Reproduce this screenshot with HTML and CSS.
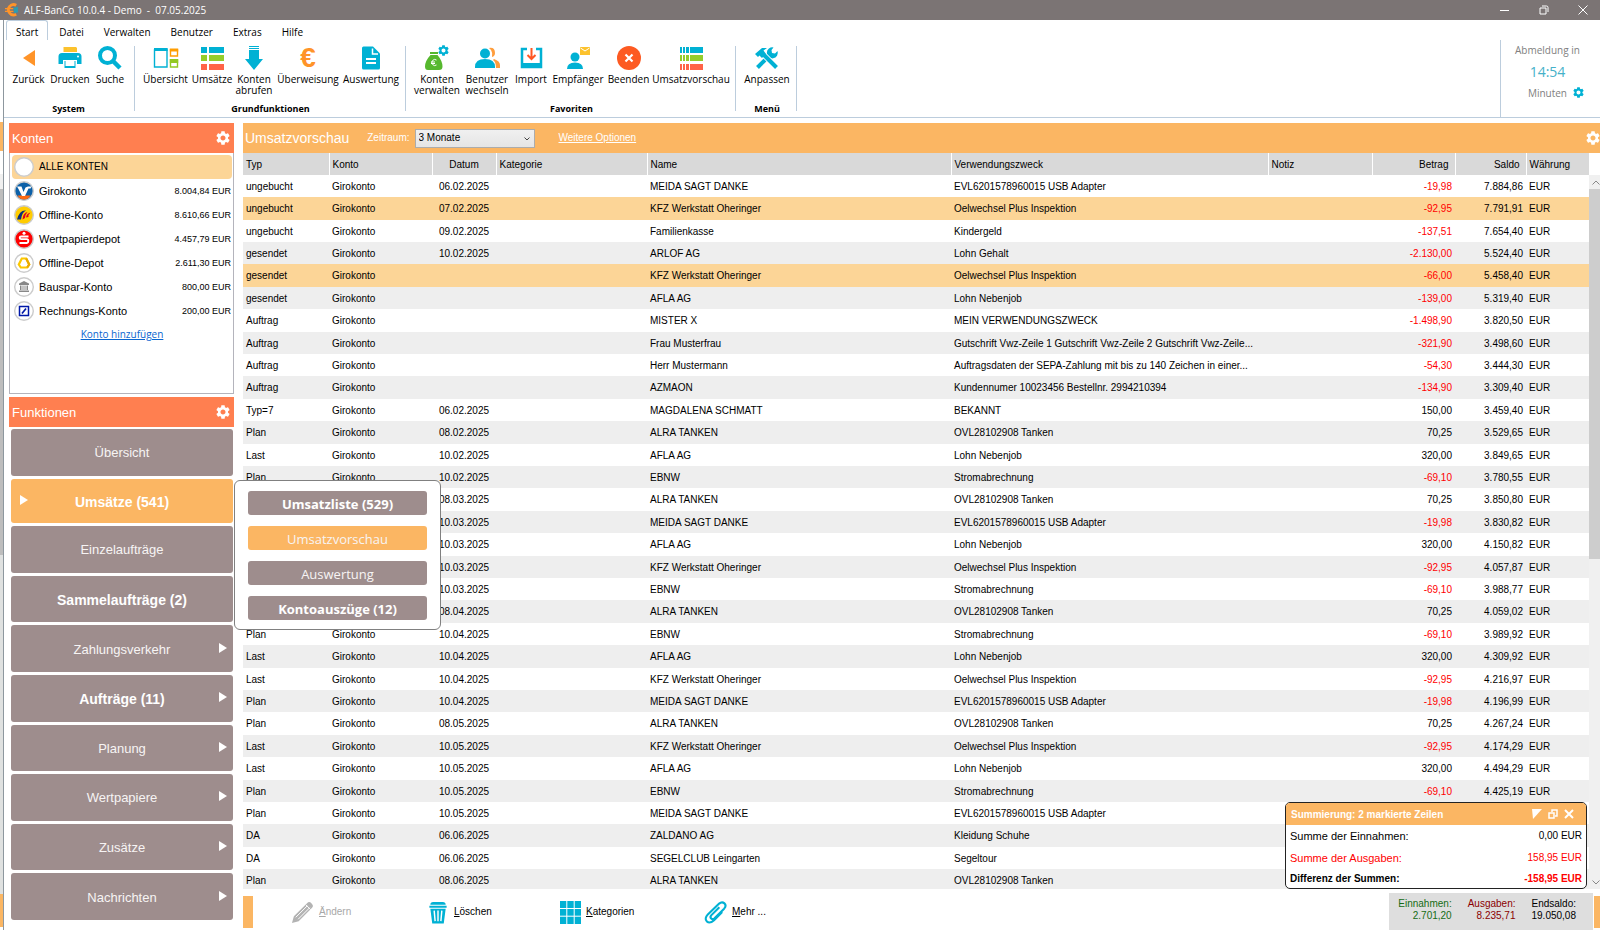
FILE: index.html
```html
<!DOCTYPE html>
<html lang="de">
<head>
    <meta charset="UTF-8">
    <meta name="viewport" content="width=device-width, initial-scale=1.0">
    <title>ALF-BanCo 10.0.4 - Demo</title>
    <link rel="stylesheet" href="styles.css">
</head>
<body>
    <!-- Shared icon shapes -->
    <svg class="sprite" aria-hidden="true">
        <symbol id="gear" viewBox="2 2 20 20"><path d="M19.14 12.94c.04-.3.06-.61.06-.94 0-.32-.02-.64-.07-.94l2.03-1.58c.18-.14.23-.41.12-.61l-1.92-3.32c-.12-.22-.37-.29-.59-.22l-2.39.96c-.5-.38-1.03-.7-1.62-.94l-.36-2.54c-.04-.24-.24-.41-.48-.41h-3.84c-.24 0-.43.17-.47.41l-.36 2.54c-.59.24-1.13.57-1.62.94l-2.39-.96c-.22-.08-.47 0-.59.22L2.74 8.87c-.12.21-.08.47.12.61l2.03 1.58c-.05.3-.09.63-.09.94s.02.64.07.94l-2.03 1.58c-.18.14-.23.41-.12.61l1.92 3.32c.12.22.37.29.59.22l2.39-.96c.5.38 1.03.7 1.62.94l.36 2.54c.05.24.24.41.48.41h3.84c.24 0 .44-.17.47-.41l.36-2.54c.59-.24 1.13-.56 1.62-.94l2.39.96c.22.08.47 0 .59-.22l1.92-3.32c.12-.22.07-.47-.12-.61l-2.01-1.58zM12 15.6c-1.98 0-3.6-1.62-3.6-3.6s1.62-3.6 3.6-3.6 3.6 1.62 3.6 3.6-1.62 3.6-3.6 3.6z"/></symbol>
        <symbol id="arrow" viewBox="0 0 8 10"><path d="M0 0l8 5-8 5z"/></symbol>
    </svg>

    <header class="titlebar">
        <svg class="app-icon" viewBox="0 0 15 15"><path d="M12 2.500A5.500 5.500 0 1 0 12 12" fill="none" stroke="#ff9429" stroke-width="3"/><path d="M0 6h9M0 9h9" stroke="#ff9429" stroke-width="1.500"/><path d="M9 5l5-1v6l-4 1z" fill="#2e9bb0"/></svg>
        <span class="app-title">ALF-BanCo 10.0.4 - Demo&nbsp; -&nbsp; 07.05.2025</span>
        <div class="window-buttons">
            <button aria-label="Minimieren"><svg viewBox="0 0 10 10"><path d="M0 5.500h9"/></svg></button>
            <button aria-label="Wiederherstellen"><svg viewBox="0 0 10 10"><path d="M1 3h6v6H1zM3 1h4.500Q9 1 9 2.500V7"/></svg></button>
            <button aria-label="Schließen"><svg viewBox="0 0 10 10"><path d="M.5.500l9 9M9.500.500l-9 9"/></svg></button>
        </div>
    </header>

    <div class="window">
        <div class="backdrop"></div>
        <div class="content">
            <div class="top">
                <div class="top-left">
                    <nav class="menu">
                        <a href="#" class="active">Start</a>
                        <a href="#">Datei</a>
                        <a href="#">Verwalten</a>
                        <a href="#">Benutzer</a>
                        <a href="#">Extras</a>
                        <a href="#">Hilfe</a>
                    </nav>
                    <div class="ribbon">
                        <section class="group group-system">
                            <div class="tools">
                                <button><svg viewBox="0 0 24 24"><path d="M18 4v16L6 12z" fill="#ff9429"/></svg>Zurück</button>
                                <button><svg viewBox="0 0 24 24"><path d="M5.500 1H18l1 1v4H5.500z" fill="#fcc22d"/><path d="M4 7h16q3.500 0 3.500 3.500V18H19v-4H5v4H.5v-7.500Q.5 7 4 7z" fill="#00b1d4"/><path d="M6.500 15h11v7h-11z" fill="#00b1d4"/><path d="M7.500 14.500h9v5.500h-9z" fill="#fff"/><circle cx="20" cy="10.500" r="1" fill="#fff"/></svg>Drucken</button>
                                <button><svg viewBox="0 0 24 24"><circle cx="9.500" cy="9.500" r="7.500" fill="none" stroke="#00b1d4" stroke-width="4"/><path d="M15 15l7 7" stroke="#00b1d4" stroke-width="4.500"/></svg>Suche</button>
                            </div>
                            <h2>System</h2>
                        </section>
                        <section class="group group-basic">
                            <div class="tools">
                                <button><svg viewBox="0 0 24 24"><path d="M.5 4h12.500v17H.5z" fill="#fff" stroke="#00b1d4" stroke-width="1.400"/><path d="M0 2h13.700v3H0z" fill="#00b1d4"/><path d="M16.500 4h7v6h-7z" fill="#fff" stroke="#ff9d00" stroke-width="1.400"/><path d="M15.800 2.500h8.400v3h-8.400z" fill="#ff9d00"/><path d="M16.500 14h7v7h-7z" fill="#fff" stroke="#93c922" stroke-width="1.400"/><path d="M15.800 13h8.400v4h-8.400z" fill="#93c922"/></svg>Übersicht</button>
                                <button><svg viewBox="0 0 24 24"><path d="M1 1h6v6H1zM9 1h15v6H9z" fill="#00b1d4"/><path d="M1 9h6v6H1zM9 9h15v6H9z" fill="#93cd2b"/><path d="M1 18h6v6H1zM9 18h15v6H9z" fill="#ff6347"/></svg>Umsätze</button>
                                <button><svg viewBox="0 0 24 24"><path d="M7 0h10v1H7zM7 2h10v1H7zM7 4h10v9h4l-9 11-9-11h4z" fill="#00b1d4"/></svg>Konten<br>abrufen</button>
                                <button><span class="euro">€</span>Überweisung</button>
                                <button><svg viewBox="0 0 24 24"><path d="M4.500.500h9.500L21 7.500V22q0 1.500-1.500 1.500h-15Q3 23.500 3 22V2Q3 .500 4.500.500z" fill="#00b1d4"/><path d="M13.500 2.500v5.500H19" fill="none" stroke="#fff" stroke-width="1.500"/><path d="M7 13h10M7 17h10" stroke="#fff" stroke-width="2"/></svg>Auswertung</button>
                            </div>
                            <h2>Grundfunktionen</h2>
                        </section>
                        <section class="group group-favorites">
                            <div class="tools">
                                <button><svg viewBox="0 0 24 24"><path d="M5 6h8v2H5zM5.500 9h7q5 6 5 11.500Q17.500 24 14 24H3Q0 24 0 20.500 0 15 5.500 9z" fill="#56b82e"/><path d="M11.500 14a3 3 0 1 0 0 5M6 16h4M6 17.500h4" fill="none" stroke="#fff"/><use href="#gear" x="13" y="-1" width="11" height="11" fill="#00b1d4"/></svg>Konten<br>verwalten</button>
                                <button><svg viewBox="0 0 24 24"><path d="M14 2q6-1 6 5 0 3-3 4 1-4-1-7zM19 13q6 2 6 6v3h-4q0-6-3-8z" fill="#ff9d3c"/><circle cx="10" cy="7.500" r="5" fill="#00b1d4"/><path d="M0 21q0-8 10-8t10 8v1H0z" fill="#00b1d4"/></svg>Benutzer<br>wechseln</button>
                                <button><svg viewBox="0 0 24 24"><path d="M8 3H3v18h19V3h-5" fill="none" stroke="#00b1d4" stroke-width="2.500"/><path d="M2 17h21v5H2z" fill="#00b1d4"/><path d="M12.500 2v10M8.500 9l4 4 4-4" fill="none" stroke="#ff5722" stroke-width="2"/></svg>Import</button>
                                <button><svg viewBox="0 0 24 24"><circle cx="9" cy="11" r="4.500" fill="#00b1d4"/><path d="M1 23q0-6.500 8-6.500t8 6.500z" fill="#00b1d4"/><path d="M14 1h10v8H14z" fill="#fcc22d"/><path d="M14.500 2l4.500 3 4.500-3" fill="none" stroke="#fff"/></svg>Empfänger</button>
                                <button><svg viewBox="0 0 24 24"><circle cx="12" cy="12" r="12" fill="#fd5a22"/><path d="M8.500 8.500l7 7M15.500 8.500l-7 7" stroke="#fff" stroke-width="2.200"/></svg>Beenden</button>
                                <button><svg viewBox="0 0 24 24"><path d="M1 1h2v6H1zM4 1h2v6H4zM7 1h3v6H7zM11 1h13v6H11z" fill="#00b1d4"/><path d="M1 9h2v6H1zM4 9h2v6H4zM7 9h3v6H7zM11 9h13v6H11z" fill="#93cd2b"/><path d="M1 18h2v6H1zM4 18h2v6H4zM7 18h3v6H7zM11 18h13v6H11z" fill="#ff6347"/></svg>Umsatzvorschau</button>
                            </div>
                            <h2>Favoriten</h2>
                        </section>
                        <section class="group group-menu">
                            <div class="tools">
                                <button><svg viewBox="0 0 24 24"><path d="M2.500 21.500l12-12" stroke="#00b1d4" stroke-width="4"/><path d="M22.500 5a5.500 5.500 0 1 1-4-3.500L16.500 4l.5 3 3 .5z" fill="#00b1d4"/><path d="M10 10l11.500 11.500" stroke="#fff" stroke-width="6"/><path d="M9 9l12.500 12.500" stroke="#00b1d4" stroke-width="4"/><path d="M0 8l7-6h5L8.500 4.500 11 8l-4 4-2.500-2.500L3 11z" fill="#00b1d4"/></svg>Anpassen</button>
                            </div>
                            <h2>Menü</h2>
                        </section>
                    </div>
                </div>
                <div class="logout">
                    <div>Abmeldung in</div>
                    <div class="time">14:54</div>
                    <div class="minutes">Minuten <svg class="gear-small"><use href="#gear"/></svg></div>
                </div>
            </div>

            <div class="body">
                <aside class="sidebar">
                    <div class="panel-head"><h2>Konten</h2><button aria-label="Konten einstellen"><svg><use href="#gear"/></svg></button></div>
                    <div class="accounts">
                        <ul>
                            <li class="selected"><svg viewBox="0 0 20 20"><circle cx="10" cy="10" r="9.300" fill="#fff" stroke="#ccc" stroke-width="1.400"/></svg><span class="name">ALLE KONTEN</span></li>
                            <li><svg viewBox="0 0 20 20"><circle cx="10" cy="10" r="9.300" fill="#0b60a8" stroke="#ccc" stroke-width="1.400"/><path d="M3.500 14.500h13q-2 4-6.500 4t-6.500-4z" fill="#ff6a13"/><path d="M3 5.500h4.500L9.500 11l2-4.500 2.500-1h3.500l-1 2h-2L11 15H8L4.500 8z" fill="#fff"/></svg><span class="name">Girokonto</span><span class="amount">8.004,84 EUR</span></li>
                            <li><svg viewBox="0 0 20 20"><circle cx="10" cy="10" r="9.300" fill="#fc0" stroke="#ccc" stroke-width="1.400"/><path d="M3 14.500Q5.500 5.500 11 5.500h1Q8 7 7 14.500z" fill="#0a2f7a"/><path d="M8.500 14.500Q9 7.500 13.500 7q-2 2-2.500 6z" fill="#e3001b"/><path d="M12 12.500q.5-4 4.500-5-2.500 2-2 4.500z" fill="#e3001b"/></svg><span class="name">Offline-Konto</span><span class="amount">8.610,66 EUR</span></li>
                            <li><svg viewBox="0 0 20 20"><circle cx="10" cy="10" r="9.300" fill="#f00" stroke="#ccc" stroke-width="1.400"/><circle cx="10" cy="4.300" r="1.500" fill="#fff"/><path d="M14.500 7.500H7.200q-1.500 0-1.500 1.300t1.500 1.300h5.600q1.500 0 1.500 1.800T12.800 14H5.500" fill="none" stroke="#fff" stroke-width="1.900"/></svg><span class="name">Wertpapierdepot</span><span class="amount">4.457,79 EUR</span></li>
                            <li><svg viewBox="0 0 20 20"><circle cx="10" cy="10" r="9.300" fill="#fff" stroke="#ccc" stroke-width="1.400"/><path d="M7.800 5.500h4.400l3 6-2 3H6.800l-2-3z" fill="none" stroke="#fcc800" stroke-width="2.200"/><path d="M12.200 5.500l3 6-2 3" fill="none" stroke="#eaa900" stroke-width="2.200"/></svg><span class="name">Offline-Depot</span><span class="amount">2.611,30 EUR</span></li>
                            <li><svg viewBox="0 0 20 20"><circle cx="10" cy="10" r="9.300" fill="#fff" stroke="#ccc" stroke-width="1.400"/><path d="M5 6.500L10 4l5 2.500V8H5zM6 8.500h1.500V13H6zM8.500 8.500h1V13h-1zM10.500 8.500h1V13h-1zM12.500 8.500H14V13h-1.500zM5 13.500h10V15H5z" fill="#888"/></svg><span class="name">Bauspar-Konto</span><span class="amount">800,00 EUR</span></li>
                            <li><svg viewBox="0 0 20 20"><circle cx="10" cy="10" r="9.300" fill="#fff" stroke="#ccc" stroke-width="1.400"/><path d="M5.500 5.500h9v9h-9z" fill="none" stroke="#0018a8" stroke-width="1.500"/><path d="M8 12.500l4-5" stroke="#0018a8" stroke-width="1.700"/></svg><span class="name">Rechnungs-Konto</span><span class="amount">200,00 EUR</span></li>
                        </ul>
                        <a href="#" class="add-account">Konto hinzufügen</a>
                    </div>
                    <div class="panel-head functions-head"><h2>Funktionen</h2><button aria-label="Funktionen einstellen"><svg><use href="#gear"/></svg></button></div>
                    <nav class="functions">
                        <button>Übersicht</button>
                        <div class="open">
                            <button class="current"><svg class="left"><use href="#arrow"/></svg>Umsätze (541)</button>
                            <div class="flyout">
                                <button class="strong">Umsatzliste (529)</button>
                                <button class="current">Umsatzvorschau</button>
                                <button>Auswertung</button>
                                <button class="strong">Kontoauszüge (12)</button>
                            </div>
                        </div>
                        <button>Einzelaufträge</button>
                        <button class="strong">Sammelaufträge (2)</button>
                        <button>Zahlungsverkehr<svg><use href="#arrow"/></svg></button>
                        <button class="strong">Aufträge (11)<svg><use href="#arrow"/></svg></button>
                        <button>Planung<svg><use href="#arrow"/></svg></button>
                        <button>Wertpapiere<svg><use href="#arrow"/></svg></button>
                        <button>Zusätze<svg><use href="#arrow"/></svg></button>
                        <button>Nachrichten<svg><use href="#arrow"/></svg></button>
                    </nav>
                </aside>

                <main class="main">
                    <div class="main-head">
                        <h1>Umsatzvorschau</h1>
                        <label for="period">Zeitraum:</label>
                        <div class="select-box">
                            <select id="period"><option>3 Monate</option><option>6 Monate</option></select>
                            <svg viewBox="0 0 6 4"><path d="M.5.500L3 3 5.500.500" fill="none" stroke="#444"/></svg>
                        </div>
                        <a href="#">Weitere Optionen</a>
                        <button aria-label="Ansicht einstellen"><svg><use href="#gear"/></svg></button>
                    </div>
                    <div class="table-area">
                        <div class="table-wrap">
                            <table>
                                <colgroup>
                                    <col class="c-typ"><col class="c-konto"><col class="c-datum"><col class="c-kategorie"><col class="c-name"><col><col class="c-notiz"><col class="c-betrag"><col class="c-saldo"><col class="c-waehrung">
                                </colgroup>
                                <thead>
                                    <tr><th>Typ</th><th>Konto</th><th class="date">Datum</th><th>Kategorie</th><th>Name</th><th>Verwendungszweck</th><th>Notiz</th><th class="num">Betrag</th><th class="num">Saldo</th><th>Währung</th></tr>
                                </thead>
                                <tbody>
                                    <tr><td>ungebucht</td><td>Girokonto</td><td class="date">06.02.2025</td><td></td><td>MEIDA SAGT DANKE</td><td>EVL6201578960015 USB Adapter</td><td></td><td class="num neg">-19,98</td><td class="num">7.884,86</td><td>EUR</td></tr>
                                    <tr class="selected"><td>ungebucht</td><td>Girokonto</td><td class="date">07.02.2025</td><td></td><td>KFZ Werkstatt Oheringer</td><td>Oelwechsel Plus Inspektion</td><td></td><td class="num neg">-92,95</td><td class="num">7.791,91</td><td>EUR</td></tr>
                                    <tr><td>ungebucht</td><td>Girokonto</td><td class="date">09.02.2025</td><td></td><td>Familienkasse</td><td>Kindergeld</td><td></td><td class="num neg">-137,51</td><td class="num">7.654,40</td><td>EUR</td></tr>
                                    <tr><td>gesendet</td><td>Girokonto</td><td class="date">10.02.2025</td><td></td><td>ARLOF AG</td><td>Lohn Gehalt</td><td></td><td class="num neg">-2.130,00</td><td class="num">5.524,40</td><td>EUR</td></tr>
                                    <tr class="selected"><td>gesendet</td><td>Girokonto</td><td class="date"></td><td></td><td>KFZ Werkstatt Oheringer</td><td>Oelwechsel Plus Inspektion</td><td></td><td class="num neg">-66,00</td><td class="num">5.458,40</td><td>EUR</td></tr>
                                    <tr><td>gesendet</td><td>Girokonto</td><td class="date"></td><td></td><td>AFLA AG</td><td>Lohn Nebenjob</td><td></td><td class="num neg">-139,00</td><td class="num">5.319,40</td><td>EUR</td></tr>
                                    <tr><td>Auftrag</td><td>Girokonto</td><td class="date"></td><td></td><td>MISTER X</td><td>MEIN VERWENDUNGSZWECK</td><td></td><td class="num neg">-1.498,90</td><td class="num">3.820,50</td><td>EUR</td></tr>
                                    <tr><td>Auftrag</td><td>Girokonto</td><td class="date"></td><td></td><td>Frau Musterfrau</td><td>Gutschrift Vwz-Zeile 1 Gutschrift Vwz-Zeile 2 Gutschrift Vwz-Zeile...</td><td></td><td class="num neg">-321,90</td><td class="num">3.498,60</td><td>EUR</td></tr>
                                    <tr><td>Auftrag</td><td>Girokonto</td><td class="date"></td><td></td><td>Herr Mustermann</td><td>Auftragsdaten der SEPA-Zahlung mit bis zu 140 Zeichen in einer...</td><td></td><td class="num neg">-54,30</td><td class="num">3.444,30</td><td>EUR</td></tr>
                                    <tr><td>Auftrag</td><td>Girokonto</td><td class="date"></td><td></td><td>AZMAON</td><td>Kundennumer 10023456 Bestellnr. 2994210394</td><td></td><td class="num neg">-134,90</td><td class="num">3.309,40</td><td>EUR</td></tr>
                                    <tr><td>Typ=7</td><td>Girokonto</td><td class="date">06.02.2025</td><td></td><td>MAGDALENA SCHMATT</td><td>BEKANNT</td><td></td><td class="num">150,00</td><td class="num">3.459,40</td><td>EUR</td></tr>
                                    <tr><td>Plan</td><td>Girokonto</td><td class="date">08.02.2025</td><td></td><td>ALRA TANKEN</td><td>OVL28102908 Tanken</td><td></td><td class="num">70,25</td><td class="num">3.529,65</td><td>EUR</td></tr>
                                    <tr><td>Last</td><td>Girokonto</td><td class="date">10.02.2025</td><td></td><td>AFLA AG</td><td>Lohn Nebenjob</td><td></td><td class="num">320,00</td><td class="num">3.849,65</td><td>EUR</td></tr>
                                    <tr><td>Plan</td><td>Girokonto</td><td class="date">10.02.2025</td><td></td><td>EBNW</td><td>Stromabrechnung</td><td></td><td class="num neg">-69,10</td><td class="num">3.780,55</td><td>EUR</td></tr>
                                    <tr><td></td><td></td><td class="date">08.03.2025</td><td></td><td>ALRA TANKEN</td><td>OVL28102908 Tanken</td><td></td><td class="num">70,25</td><td class="num">3.850,80</td><td>EUR</td></tr>
                                    <tr><td></td><td></td><td class="date">10.03.2025</td><td></td><td>MEIDA SAGT DANKE</td><td>EVL6201578960015 USB Adapter</td><td></td><td class="num neg">-19,98</td><td class="num">3.830,82</td><td>EUR</td></tr>
                                    <tr><td></td><td></td><td class="date">10.03.2025</td><td></td><td>AFLA AG</td><td>Lohn Nebenjob</td><td></td><td class="num">320,00</td><td class="num">4.150,82</td><td>EUR</td></tr>
                                    <tr><td></td><td></td><td class="date">10.03.2025</td><td></td><td>KFZ Werkstatt Oheringer</td><td>Oelwechsel Plus Inspektion</td><td></td><td class="num neg">-92,95</td><td class="num">4.057,87</td><td>EUR</td></tr>
                                    <tr><td></td><td></td><td class="date">10.03.2025</td><td></td><td>EBNW</td><td>Stromabrechnung</td><td></td><td class="num neg">-69,10</td><td class="num">3.988,77</td><td>EUR</td></tr>
                                    <tr><td></td><td></td><td class="date">08.04.2025</td><td></td><td>ALRA TANKEN</td><td>OVL28102908 Tanken</td><td></td><td class="num">70,25</td><td class="num">4.059,02</td><td>EUR</td></tr>
                                    <tr><td>Plan</td><td>Girokonto</td><td class="date">10.04.2025</td><td></td><td>EBNW</td><td>Stromabrechnung</td><td></td><td class="num neg">-69,10</td><td class="num">3.989,92</td><td>EUR</td></tr>
                                    <tr><td>Last</td><td>Girokonto</td><td class="date">10.04.2025</td><td></td><td>AFLA AG</td><td>Lohn Nebenjob</td><td></td><td class="num">320,00</td><td class="num">4.309,92</td><td>EUR</td></tr>
                                    <tr><td>Last</td><td>Girokonto</td><td class="date">10.04.2025</td><td></td><td>KFZ Werkstatt Oheringer</td><td>Oelwechsel Plus Inspektion</td><td></td><td class="num neg">-92,95</td><td class="num">4.216,97</td><td>EUR</td></tr>
                                    <tr><td>Plan</td><td>Girokonto</td><td class="date">10.04.2025</td><td></td><td>MEIDA SAGT DANKE</td><td>EVL6201578960015 USB Adapter</td><td></td><td class="num neg">-19,98</td><td class="num">4.196,99</td><td>EUR</td></tr>
                                    <tr><td>Plan</td><td>Girokonto</td><td class="date">08.05.2025</td><td></td><td>ALRA TANKEN</td><td>OVL28102908 Tanken</td><td></td><td class="num">70,25</td><td class="num">4.267,24</td><td>EUR</td></tr>
                                    <tr><td>Last</td><td>Girokonto</td><td class="date">10.05.2025</td><td></td><td>KFZ Werkstatt Oheringer</td><td>Oelwechsel Plus Inspektion</td><td></td><td class="num neg">-92,95</td><td class="num">4.174,29</td><td>EUR</td></tr>
                                    <tr><td>Last</td><td>Girokonto</td><td class="date">10.05.2025</td><td></td><td>AFLA AG</td><td>Lohn Nebenjob</td><td></td><td class="num">320,00</td><td class="num">4.494,29</td><td>EUR</td></tr>
                                    <tr><td>Plan</td><td>Girokonto</td><td class="date">10.05.2025</td><td></td><td>EBNW</td><td>Stromabrechnung</td><td></td><td class="num neg">-69,10</td><td class="num">4.425,19</td><td>EUR</td></tr>
                                    <tr><td>Plan</td><td>Girokonto</td><td class="date">10.05.2025</td><td></td><td>MEIDA SAGT DANKE</td><td>EVL6201578960015 USB Adapter</td><td></td><td></td><td></td><td></td></tr>
                                    <tr><td>DA</td><td>Girokonto</td><td class="date">06.06.2025</td><td></td><td>ZALDANO AG</td><td>Kleidung Schuhe</td><td></td><td></td><td></td><td></td></tr>
                                    <tr><td>DA</td><td>Girokonto</td><td class="date">06.06.2025</td><td></td><td>SEGELCLUB Leingarten</td><td>Segeltour</td><td></td><td></td><td></td><td></td></tr>
                                    <tr><td>Plan</td><td>Girokonto</td><td class="date">08.06.2025</td><td></td><td>ALRA TANKEN</td><td>OVL28102908 Tanken</td><td></td><td></td><td></td><td></td></tr>
                                </tbody>
                            </table>
                        </div>
                        <div class="scrollbar">
                            <svg viewBox="0 0 8 5"><path d="M.5 4.500L4 1l3.500 3.500"/></svg>
                            <div class="track"><div class="thumb"></div></div>
                            <svg viewBox="0 0 8 5"><path d="M.5.500L4 4 7.500.500"/></svg>
                        </div>

                        <div class="sum-box">
                            <div class="sum-head">
                                <span>Summierung: 2 markierte Zeilen</span>
                                <button aria-label="Verkleinern"><svg viewBox="0 0 10 10"><path d="M0 0h10L1 10z" fill="#fff"/></svg></button>
                                <button aria-label="Kopieren"><svg viewBox="0 0 10 10"><path d="M1 4h5v5H1zM4 3V1h5v6H7" fill="none" stroke="#fff" stroke-width="1.500"/></svg></button>
                                <button aria-label="Schließen"><svg viewBox="0 0 10 10"><path d="M1 1l8 8M9 1L1 9" stroke="#fff" stroke-width="2"/></svg></button>
                            </div>
                            <div class="sum-row"><span>Summe der Einnahmen:</span><b>0,00 EUR</b></div>
                            <div class="sum-row neg"><span>Summe der Ausgaben:</span><b>158,95 EUR</b></div>
                            <div class="sum-row diff"><span>Differenz der Summen:</span><b class="neg">-158,95 EUR</b></div>
                        </div>
                    </div>
                    <footer class="footer">
                        <div class="actions">
                            <button disabled><svg viewBox="0 0 24 24"><path d="M1 23l2-7L17 2q2-2 4.500.500T22 7L8 21z" fill="#b3b3b3"/><path d="M5 17L17 5M7.500 19L19.500 7" stroke="#fff"/><path d="M15.500 4l5 5" stroke="#fff"/></svg><span><u>Ä</u>ndern</span></button>
                            <button><svg class="bin" viewBox="0 0 18 24"><path d="M1 4Q1 1 4 1h10q3 0 3 3zM0 5h18v2H0zM1 8h16l-2 15.500H3z" fill="#00b1d4"/><path d="M5 10l1 11M9 10v11M13 10l-1 11" stroke="#fff" stroke-width="1.500"/></svg><span><u>L</u>öschen</span></button>
                            <button><svg class="tiles" viewBox="0 0 21 23"><path d="M0 0h21v23H0z" fill="#00b1d4"/><path d="M6.800 0v23M14.200 0v23M0 7.500h21M0 15.200h21" stroke="#fff"/></svg><span><u>K</u>ategorien</span></button>
                            <button><svg viewBox="0 0 24 24"><path d="M16 6.500L7.500 15q-1.500 1.800 0 3.200t3.200 0L21 8q2.800-3.200.3-5.500t-5.500.2L4 14q-4 4.500-1 7.300t7.500-1.300l8.500-8.500" fill="none" stroke="#00b1d4" stroke-width="2.200"/></svg><span><u>M</u>ehr ...</span></button>
                        </div>
                        <dl class="totals">
                            <div class="in"><dt>Einnahmen:</dt><dd>2.701,20</dd></div>
                            <div class="out"><dt>Ausgaben:</dt><dd>8.235,71</dd></div>
                            <div><dt>Endsaldo:</dt><dd>19.050,08</dd></div>
                        </dl>
                    </footer>
                </main>
            </div>
        </div>
    </div>
</body>
</html>
```
FILE: styles.css
```css
* {
    box-sizing: border-box;
}
body {
    margin: 0;
    height: 100vh;
    display: flex;
    flex-direction: column;
    overflow: hidden;
    background-color: #fff;
    color: #000;
    font-family: "Liberation Sans", Arial, sans-serif;
    font-size: 10px;
    line-height: 12px;
}
h1, h2, ul, dl, dd {
    margin: 0;
    padding: 0;
}
button {
    font: inherit;
    color: inherit;
    background: none;
    border: 0;
    padding: 0;
}
svg {
    display: block;
    overflow: visible;
}
.sprite {
    position: absolute;
    width: 0;
    height: 0;
}

/* Title bar */
.titlebar {
    display: flex;
    align-items: center;
    height: 20px;
    padding: 0 12px 0 5px;
    background-color: #7b7474;
    color: #fff;
    font-family: "Open Sans", "Segoe UI", sans-serif;
}
.app-icon {
    width: 14px;
    height: 14px;
    margin-right: 5px;
}
.app-title {
    flex: 1;
}
.window-buttons {
    display: flex;
    gap: 29px;
}
.window-buttons svg {
    width: 10px;
    height: 10px;
    fill: none;
    stroke: #fff;
}

.window {
    flex: 1;
    min-height: 0;
    display: flex;
}
/* Edge of the window behind */
.backdrop {
    width: 4px;
    border-right: 1px solid #8d979e;
    background: linear-gradient(#fff 102px, #fbb663 102px 131px, #fff 131px 154px, #f0f0f0 154px 169px, #bdbdbd 169px 535px, #dfe1e0 535px 874px, #fbb663 874px 907px, #fff 907px);
}
.content {
    flex: 1;
    min-width: 0;
    display: flex;
    flex-direction: column;
}

/* Menu and ribbon */
.top {
    display: flex;
    height: 98px;
    border-bottom: 1px solid #bccddd;
    font-family: "Open Sans", "Segoe UI", sans-serif;
}
.top-left {
    flex: 1;
}
.menu {
    display: flex;
    height: 20px;
    padding-left: 2px;
}
.menu a {
    padding: 6px 9px 0 9px;
    margin-right: 2px;
    color: #000;
    text-decoration: none;
}
.menu .active {
    border: 1px solid #bccddd;
    border-bottom: 0;
    border-radius: 3px 3px 0 0;
    padding-top: 5px;
}
.ribbon {
    display: flex;
    padding-top: 6px;
}
.group {
    height: 65px;
    display: flex;
    flex-direction: column;
    justify-content: space-between;
    border-right: 1px solid #bccddd;
}
.group h2 {
    font-size: 9px;
    line-height: 4px;
    text-align: center;
}
.tools {
    display: grid;
    align-items: start;
}
.group-system {
    padding: 0 6px 0 5px;
}
.group-system .tools {
    grid-template-columns: 39px 44px 36px;
}
.group-basic {
    padding: 0 5px 0 6px;
}
.group-basic .tools {
    grid-template-columns: 49px 44px 40px 68px 58px;
}
.group-favorites {
    padding: 0 4px 0 6px;
}
.group-favorites .tools {
    grid-template-columns: 50px 50px 38px 56px 45px 80px;
}
.group-menu {
    padding: 0 2px 0 4px;
}
.group-menu .tools {
    grid-template-columns: 54px;
}
.tools button {
    display: flex;
    flex-direction: column;
    align-items: center;
    line-height: 11px;
    white-space: nowrap;
}
.tools svg, .euro {
    width: 24px;
    height: 24px;
    margin-bottom: 4px;
}
.euro {
    color: #ff9429;
    font: bold 28px/24px "Liberation Sans", Arial, sans-serif;
}
.logout {
    width: 100px;
    margin-top: 20px;
    padding: 4px 6px 0 0;
    border-left: 1px solid #bccddd;
    color: #808080;
    text-align: center;
}
.time {
    color: #45b1c9;
    font-size: 14px;
    line-height: 31px;
}
.minutes {
    display: flex;
    justify-content: flex-end;
    gap: 6px;
    padding-right: 10px;
}
.gear-small {
    width: 11px;
    height: 11px;
    fill: #00b1d4;
}

/* Sidebar */
.body {
    flex: 1;
    min-height: 0;
    display: flex;
    gap: 9px;
    padding: 5px 0 0 5px;
}
.sidebar {
    width: 225px;
    display: flex;
    flex-direction: column;
}
.panel-head {
    display: flex;
    justify-content: space-between;
    align-items: center;
    height: 30px;
    padding: 0 4px 0 3px;
    background-color: #ff7f50;
    color: #fff;
}
.panel-head h2 {
    padding-top: 2px;
    font-size: 13px;
    font-weight: normal;
}
.panel-head svg, .main-head button svg {
    width: 14px;
    height: 14px;
    fill: #fff;
}
.accounts {
    height: 241px;
    padding: 2px 1px 0 2px;
    border: 1px solid #b4b4bc;
    border-top: 0;
    text-align: center;
}
.accounts ul {
    list-style: none;
}
.accounts li {
    display: flex;
    align-items: center;
    height: 24px;
    padding: 0 1px 0 2px;
    border-radius: 4px;
}
.accounts .selected {
    background-color: #fcd597;
}
.accounts li svg {
    width: 20px;
    height: 20px;
    margin-right: 5px;
}
.name {
    flex: 1;
    font-size: 11px;
    text-align: left;
}
.selected .name {
    font-size: 10px;
}
.amount {
    font-size: 9px;
}
.add-account {
    display: inline-block;
    margin-top: 5px;
    color: #0a66d0;
    font-family: "Open Sans", "Segoe UI", sans-serif;
}
.functions-head {
    margin-top: 3px;
}
.functions {
    flex: 1;
    display: flex;
    flex-direction: column;
    gap: 3px;
    padding: 2px 1px 10px 2px;
    font-size: 13px;
}
.functions > button, .open {
    flex: 1;
    position: relative;
}
.functions button {
    padding-top: 2px;
    background-color: #9e8d8d;
    border-radius: 3px;
    color: #f7f4f4;
}
.open > button {
    width: 100%;
    height: 100%;
}
.functions > .strong, .open > button {
    font-size: 14px;
}
.functions .strong, .open > button {
    font-weight: bold;
    color: #fff;
}
.functions .current {
    background-color: #fbb663;
}
.functions svg {
    position: absolute;
    top: 50%;
    right: 6px;
    width: 8px;
    height: 10px;
    margin-top: -6px;
    fill: #fff;
}
.functions .left {
    right: auto;
    left: 9px;
}
.flyout {
    position: absolute;
    z-index: 2;
    top: 1px;
    left: 100%;
    width: 207px;
    margin-left: 1px;
    display: flex;
    flex-direction: column;
    gap: 11px;
    padding: 10px 13px 9px;
    border: 1px solid #808080;
    border-radius: 6px;
    background-color: #fff;
    font-family: "Open Sans", "Segoe UI", sans-serif;
}
.flyout button {
    height: 24px;
}

/* Main view */
.main {
    flex: 1;
    min-width: 0;
    display: flex;
    flex-direction: column;
}
.main-head {
    display: flex;
    align-items: center;
    height: 30px;
    padding-left: 2px;
    background-color: #fbb663;
    color: #fff;
}
.main-head h1 {
    margin-right: 18px;
    font-size: 14px;
    font-weight: normal;
}
.main-head a {
    margin-left: 24px;
    color: #fff;
}
.main-head button {
    margin-left: auto;
}
.select-box {
    position: relative;
    margin-left: 5px;
}
.select-box select {
    appearance: none;
    display: block;
    width: 120px;
    height: 19px;
    padding: 0 3px;
    border: 1px solid #acacac;
    border-radius: 0;
    background: linear-gradient(#f0f0f0, #e5e5e5);
    color: #000;
    font: inherit;
}
.select-box svg {
    position: absolute;
    top: 8px;
    right: 5px;
    width: 6px;
    height: 4px;
}
.table-area {
    flex: 1;
    min-height: 0;
    position: relative;
    display: flex;
}
.table-wrap {
    flex: 1;
    overflow: hidden;
}
table {
    width: 100%;
    table-layout: fixed;
    border-collapse: collapse;
}
.c-typ { width: 86px; }
.c-konto { width: 103px; }
.c-datum { width: 64px; }
.c-kategorie { width: 151px; }
.c-name { width: 304px; }
.c-notiz { width: 104px; }
.c-betrag { width: 83px; }
.c-saldo { width: 71px; }
.c-waehrung { width: 63px; }
th, td {
    height: 22px;
    padding: 2px 3px 0;
    text-align: left;
    white-space: nowrap;
    overflow: hidden;
}
th {
    background-color: #d9d9d9;
    font-weight: normal;
    border-right: 1px solid #fff;
}
th:last-child {
    border-right: 0;
}
tbody tr:nth-child(5n) td, tbody tr:nth-child(5n+2) td {
    height: 23px;
    padding-top: 1px;
}
tbody tr:nth-child(even) {
    background-color: #eee;
}
tbody tr.selected {
    background-color: #fcd597;
}
.num {
    text-align: right;
}
th.num {
    padding-right: 6px;
}
.date {
    text-align: center;
}
.neg {
    color: #f00;
}
.scrollbar {
    width: 11px;
    margin-top: 22px;
    display: flex;
    flex-direction: column;
    background-color: #f0f0f0;
}
.scrollbar svg {
    width: 8px;
    height: 5px;
    margin: 5px 0 4px 3px;
    fill: none;
    stroke: #888;
}
.track {
    flex: 1;
}
.thumb {
    height: 54%;
    background-color: #cdcdcd;
}

/* Sum of the selected rows */
.sum-box {
    position: absolute;
    right: 13px;
    bottom: 0;
    width: 302px;
    border: 1px solid #222;
    border-radius: 5px;
    background-color: #fff;
    overflow: hidden;
}
.sum-head {
    display: flex;
    align-items: center;
    gap: 6px;
    height: 22px;
    padding: 0 12px 0 5px;
    background-color: #fbb663;
    color: #fff;
    font-weight: bold;
}
.sum-head span {
    flex: 1;
    padding-top: 1px;
}
.sum-head svg {
    width: 10px;
    height: 10px;
}
.sum-row {
    display: flex;
    justify-content: space-between;
    padding: 0 4px;
    line-height: 22px;
}
.sum-row span {
    font-size: 11px;
}
.sum-row b {
    font-weight: normal;
}
.diff {
    line-height: 19px;
}
.diff span, .diff b {
    font-size: 10px;
    font-weight: bold;
}

/* Footer */
.footer {
    display: flex;
    align-items: flex-start;
    height: 41px;
    padding-top: 4px;
}
.actions {
    flex: 1;
    display: grid;
    grid-template-columns: 138px 131px 144px auto;
    justify-content: start;
    height: 32px;
    margin-top: 3px;
    padding-left: 38px;
    border-left: 10px solid #fbb663;
}
.actions button {
    display: flex;
    align-items: center;
    gap: 5px;
}
.actions button:disabled {
    color: #a8a8a8;
}
.actions svg {
    width: 23px;
    height: 23px;
}
.actions .bin {
    width: 18px;
    margin-right: 2px;
}
.actions .tiles {
    width: 21px;
}
.totals {
    display: flex;
    justify-content: flex-end;
    gap: 16px;
    width: 204px;
    height: 37px;
    padding: 5px 17px 0 0;
    background-color: #dedede;
    text-align: right;
}
.totals .in {
    color: #146c14;
}
.totals .out {
    color: #8b0000;
}
.footer::after {
    content: "";
    width: 6px;
    height: 32px;
    margin: 3px 0 0 1px;
    background-color: #fbb663;
}
```
